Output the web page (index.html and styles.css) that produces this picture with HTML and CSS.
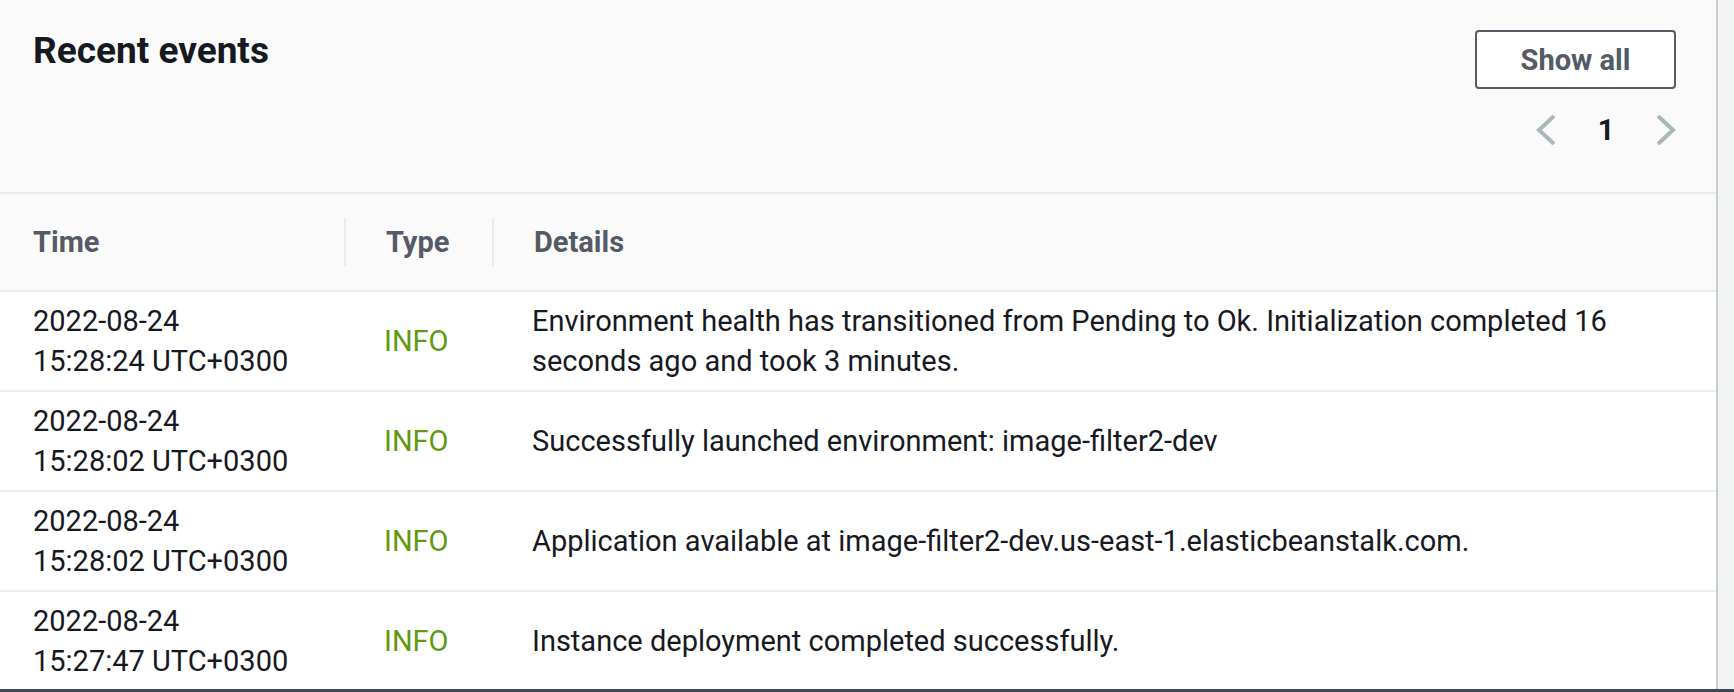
FILE: index.html
```html
<!DOCTYPE html>
<html lang="en">
<head>
<meta charset="utf-8">
<title>Recent events</title>
<link rel="stylesheet" href="styles.css">
</head>
<body>
<div class="page">
  <section class="panel">
    <header class="panel-header">
      <h2 class="title">Recent events</h2>
      <div class="actions">
        <button class="btn" type="button">Show all</button>
        <nav class="pager">
          <svg class="chev" width="20" height="30" viewBox="0 0 20 30"><path d="M18 1 L3 15 L18 29" fill="none" stroke="#aab7b8" stroke-width="4"/></svg>
          <span class="page-num">1</span>
          <svg class="chev" width="20" height="30" viewBox="0 0 20 30"><path d="M2 1 L17 15 L2 29" fill="none" stroke="#aab7b8" stroke-width="4"/></svg>
        </nav>
      </div>
    </header>
    <table class="events">
      <colgroup>
        <col class="c-time">
        <col class="c-type">
        <col class="c-details">
      </colgroup>
      <thead>
        <tr>
          <th class="th-first"><div class="th-in">Time</div></th>
          <th><div class="th-in sep">Type</div></th>
          <th><div class="th-in sep">Details</div></th>
        </tr>
      </thead>
      <tbody>
        <tr>
          <td class="td-time">2022-08-24<br>15:28:24 UTC+0300</td>
          <td class="td-type">INFO</td>
          <td class="td-det">Environment health has transitioned from Pending to Ok. Initialization completed 16 seconds ago and took 3 minutes.</td>
        </tr>
        <tr>
          <td class="td-time">2022-08-24<br>15:28:02 UTC+0300</td>
          <td class="td-type">INFO</td>
          <td class="td-det">Successfully launched environment: image-filter2-dev</td>
        </tr>
        <tr>
          <td class="td-time">2022-08-24<br>15:28:02 UTC+0300</td>
          <td class="td-type">INFO</td>
          <td class="td-det">Application available at image-filter2-dev.us-east-1.elasticbeanstalk.com.</td>
        </tr>
        <tr>
          <td class="td-time">2022-08-24<br>15:27:47 UTC+0300</td>
          <td class="td-type">INFO</td>
          <td class="td-det">Instance deployment completed successfully.</td>
        </tr>
      </tbody>
    </table>
  </section>
  <div class="strip"></div>
</div>
<div class="footer-bar"></div>
</body>
</html>
```

FILE: styles.css
```css
html, body {
  margin: 0;
  padding: 0;
  height: 692px;
  overflow: hidden;
}
body {
  background: #f2f3f3;
  font-family: Roboto, "Liberation Sans", sans-serif;
  color: #16191f;
}
.page {
  display: flex;
  height: 692px;
}
.panel {
  width: 1716px;
  border-right: 2px solid #c9cdcf;
  background: #ffffff;
  height: 692px;
  overflow: hidden;
}
.strip {
  flex: 1;
  background: #f2f3f3;
}
.panel-header {
  display: flex;
  justify-content: space-between;
  align-items: flex-start;
  background: #fafafa;
  height: 192px;
  box-sizing: border-box;
  padding: 30px 40px 0 33px;
}
.title {
  margin: 0;
  font-size: 37px;
  line-height: 42px;
  font-weight: 700;
  color: #16191f;
}
.actions {
  display: flex;
  flex-direction: column;
  align-items: flex-end;
}
.btn {
  width: 201px;
  height: 59px;
  border: 2px solid #545b64;
  border-radius: 4px;
  background: #ffffff;
  color: #545b64;
  font-family: inherit;
  font-size: 29px;
  font-weight: 700;
  padding: 0;
}
.pager {
  display: flex;
  align-items: center;
  margin-top: 21px;
  height: 40px;
}
.chev {
  display: block;
}
.page-num {
  width: 100px;
  text-align: center;
  font-size: 29px;
  font-weight: 700;
  color: #16191f;
}
.events {
  width: 100%;
  border-collapse: collapse;
  table-layout: fixed;
  border-top: 2px solid #eaeded;
}
.c-time { width: 344px; }
.c-type { width: 148px; }
thead th {
  background: #fafafa;
  height: 96px;
  padding: 0;
  text-align: left;
  vertical-align: middle;
  border-bottom: 2px solid #eaeded;
  font-size: 29px;
  font-weight: 700;
  color: #545b64;
}
.th-in {
  line-height: 48px;
  padding-left: 40px;
}
.th-first .th-in {
  padding-left: 33px;
}
.th-in.sep {
  border-left: 2px solid #eaeded;
}
tbody td {
  height: 98px;
  box-sizing: border-box;
  padding: 9px 40px 9px 40px;
  border-bottom: 2px solid #eaeded;
  font-size: 29px;
  line-height: 40px;
  vertical-align: middle;
  color: #16191f;
}
tbody td.td-time {
  padding-left: 33px;
  padding-right: 0;
}
tbody td.td-type {
  color: #5f9a10;
}
.footer-bar {
  position: fixed;
  left: 0;
  right: 0;
  bottom: 0;
  height: 3px;
  background: #414750;
}
```
